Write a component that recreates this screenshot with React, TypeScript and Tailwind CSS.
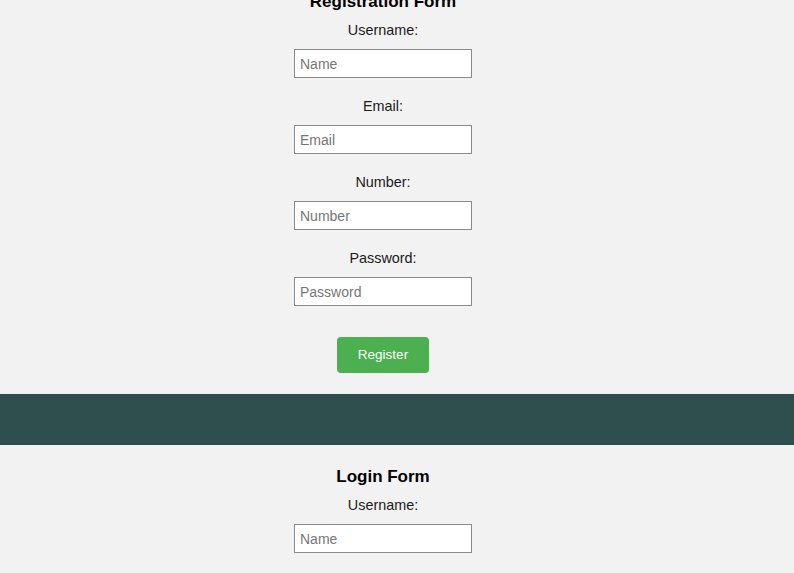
import React from "react";

function Field({ label, placeholder, first }: { label: string; placeholder: string; first?: boolean }) {
  return (
    <>
      <label className={`${first ? "mt-[8px]" : "mt-[19px]"} h-[18px] text-[14.4px] leading-[18px] text-[#1a1a1a]`}>
        {label}
      </label>
      <input
        type="text"
        placeholder={placeholder}
        className="mt-[10px] box-border h-[29px] w-[178px] border border-[#8a8a8a] bg-white pl-[5px] text-[14px] text-black outline-none placeholder:text-[#767676]"
      />
    </>
  );
}

export default function App() {
  return (
    <div className="h-[573px] w-full overflow-hidden bg-[#f2f2f2] font-['Liberation_Sans',Arial,sans-serif]">
      <section className="flex flex-col items-center pb-[20px] pr-[28px]">
        <h2 className="-mt-[9px] h-[22px] text-[17px] font-bold leading-[22px] text-black">Registration Form</h2>
        <Field label="Username:" placeholder="Name" first />
        <Field label="Email:" placeholder="Email" />
        <Field label="Number:" placeholder="Number" />
        <Field label="Password:" placeholder="Password" />
        <button className="mt-[31px] h-[36px] w-[92px] rounded-[4px] bg-[#4caf50] text-[13.5px] text-white">
          Register
        </button>
      </section>
      <div className="h-[52px] w-full border-t border-[#e8f0ee] bg-[#2f4f4f]" />
      <section className="flex flex-col items-center pr-[28px]">
        <h2 className="mt-[21px] h-[22px] text-[17px] font-bold leading-[22px] text-black">Login Form</h2>
        <Field label="Username:" placeholder="Name" first />
      </section>
    </div>
  );
}
